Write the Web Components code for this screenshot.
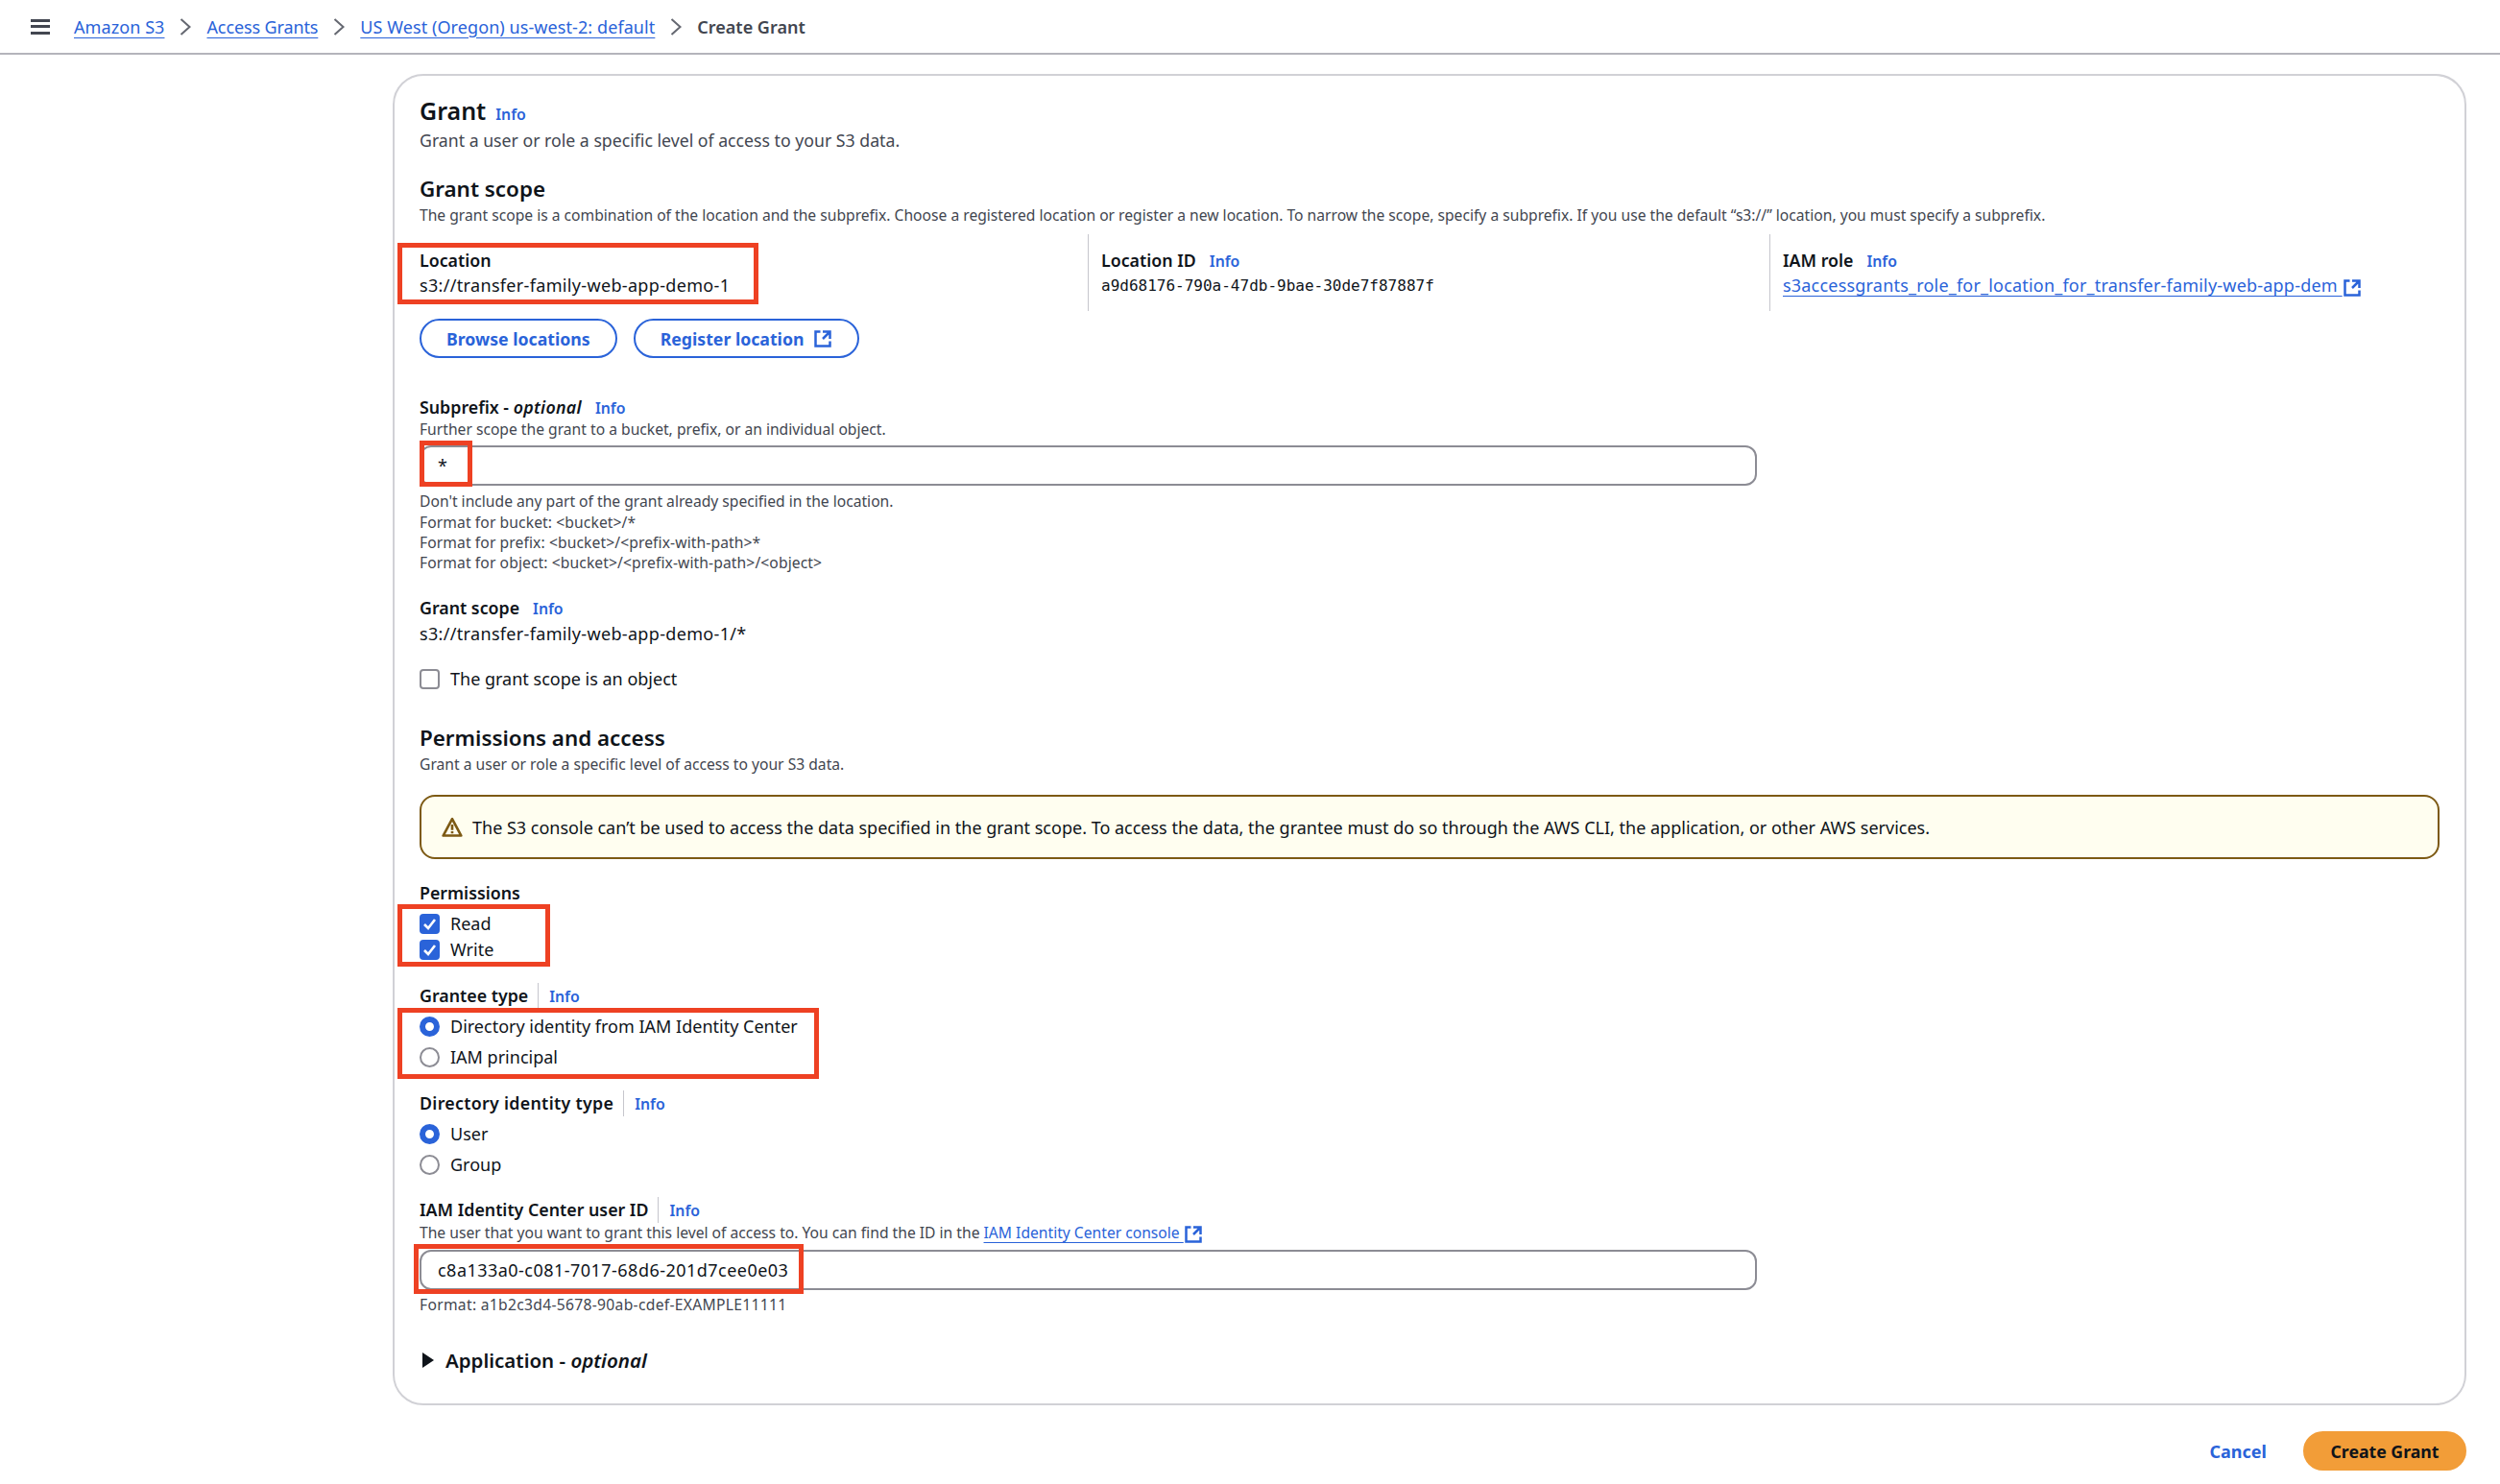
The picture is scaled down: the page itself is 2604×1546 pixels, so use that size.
<!DOCTYPE html>
<html>
<head>
<meta charset="utf-8">
<title>Create Grant</title>
<style>
  html, body { margin: 0; background: #fff; }
  body { font-family: "Noto Sans", "Open Sans", sans-serif; color: #0f141a; }
</style>
</head>
<body>
<grant-page></grant-page>

<script>
const BLUE = "#2a63d9";

class InfoLink extends HTMLElement {
  connectedCallback() {
    this.attachShadow({ mode: "open" });
    this.shadowRoot.innerHTML = `<style>
        :host { display: inline-block; color: ${BLUE}; font-size: 15.8px; font-weight: 600; font-style: normal; }
      </style>Info`;
  }
}
customElements.define("info-link", InfoLink);

class ExtIcon extends HTMLElement {
  connectedCallback() {
    this.attachShadow({ mode: "open" });
    const size = this.getAttribute("size") || 20;
    this.shadowRoot.innerHTML = `<style>
        :host { display: inline-block; width: ${size}px; height: ${size}px; vertical-align: -2px; margin: -4px 0; }
        svg { display: block; }
      </style>
      <svg width="${size}" height="${size}" viewBox="0 0 16 16" fill="none" stroke="${BLUE}" stroke-width="2">
        <path d="M14 8.01v-6H8M14.02 2 8 8M6 2H2v12h12v-4"/>
      </svg>`;
  }
}
customElements.define("ext-icon", ExtIcon);

class TopCrumbs extends HTMLElement {
  connectedCallback() {
    this.attachShadow({ mode: "open" });
    const chevron = `<svg class="chev" width="12" height="20" viewBox="0 0 12 20" fill="none" stroke="#656871" stroke-width="2"><path d="M1.5 2l9 8-9 8"/></svg>`;
    this.shadowRoot.innerHTML = `<style>
        :host { display: flex; align-items: center; height: 57px; box-sizing: border-box; border-bottom: 2px solid #b4b4bb; padding-left: 32px; font-size: 18px; }
        .menu { width: 20px; height: 16px; margin-right: 25px; border-top: 3px solid #424650; border-bottom: 3px solid #424650; box-sizing: border-box; }
        .menu::after { content: ""; display: block; height: 3px; margin-top: 3.5px; background: #424650; }
        a { color: ${BLUE}; text-decoration: underline; text-underline-offset: 4px; letter-spacing: .08px; }
        .chev { margin: 0 16px; }
        .cur { color: #424650; font-weight: 600; }
      </style>
      <div class="menu"></div>
      <a>Amazon S3</a>${chevron}<a style="letter-spacing:-.12px">Access Grants</a>${chevron}<a>US West (Oregon) us-west-2: default</a>${chevron}<span class="cur">Create Grant</span>`;
  }
}
customElements.define("top-crumbs", TopCrumbs);

class PillButton extends HTMLElement {
  connectedCallback() {
    this.attachShadow({ mode: "open" });
    this.shadowRoot.innerHTML = `<style>
        :host { display: inline-flex; align-items: center; gap: 10px; height: 41px; box-sizing: border-box; padding: 0 26px; border: 2px solid ${BLUE}; border-radius: 21px; color: ${BLUE}; font-size: 17.7px; font-weight: 700; }
        :host([primary]) { background: #f29d38; border-color: #f29d38; color: #0f141a; padding: 0 26.5px; }
      </style><slot></slot>`;
  }
}
customElements.define("pill-button", PillButton);

class FieldLabel extends HTMLElement {
  connectedCallback() {
    this.attachShadow({ mode: "open" });
    const info = this.getAttribute("info");
    const cls = info === "bar" ? "bar" : "";
    this.shadowRoot.innerHTML = `<style>
        :host { display: flex; align-items: center; height: 26px; font-size: 17.8px; font-weight: 600; color: #0f141a; }
        .row { display: flex; align-items: center; }
        .sep { margin-left: 14px; }
        .bar .sep { margin-left: 10px; padding-left: 11px; border-left: 1px solid #c6c6cd; line-height: 26px; }
      </style>
      <div class="row ${cls}"><span><slot></slot></span>
      ${info !== null ? `<span class="sep"><info-link></info-link></span>` : ""}</div>`;
  }
}
customElements.define("field-label", FieldLabel);

class TextBox extends HTMLElement {
  connectedCallback() {
    this.attachShadow({ mode: "open" });
    this.shadowRoot.innerHTML = `<style>
        :host { display: flex; align-items: center; width: 1393px; height: 42px; box-sizing: border-box; padding-left: 17px; border: 2px solid #8c8c94; border-radius: 12px; font-size: 18px; background: #fff; }
      </style><slot></slot>`;
  }
}
customElements.define("text-box", TextBox);

class CheckItem extends HTMLElement {
  connectedCallback() {
    this.attachShadow({ mode: "open" });
    const on = this.hasAttribute("checked");
    const mark = on ? `<svg width="21" height="21" viewBox="0 0 21 21" fill="none" stroke="#fff" stroke-width="2.6"><path d="M5 11l4 4 7-9"/></svg>` : "";
    this.shadowRoot.innerHTML = `<style>
        :host { display: flex; align-items: center; gap: 11px; font-size: 18px; color: #0f141a; }
        .box { width: 21px; height: 21px; box-sizing: border-box; border-radius: 4px; border: 2px solid #8c8c94; flex: none; }
        .on { background: ${BLUE}; border: 0; }
        svg { display: block; }
      </style>
      <span class="box ${on ? "on" : ""}">${mark}</span><span><slot></slot></span>`;
  }
}
customElements.define("check-item", CheckItem);

class RadioItem extends HTMLElement {
  connectedCallback() {
    this.attachShadow({ mode: "open" });
    const on = this.hasAttribute("checked");
    this.shadowRoot.innerHTML = `<style>
        :host { display: flex; align-items: center; gap: 11px; font-size: 18px; color: #0f141a; }
        .dot { width: 21px; height: 21px; box-sizing: border-box; border-radius: 50%; border: 2.5px solid #8c8c94; flex: none; }
        .on { border: 6px solid ${BLUE}; }
      </style>
      <span class="dot ${on ? "on" : ""}"></span><span><slot></slot></span>`;
  }
}
customElements.define("radio-item", RadioItem);

class WarnBox extends HTMLElement {
  connectedCallback() {
    this.attachShadow({ mode: "open" });
    this.shadowRoot.innerHTML = `<style>
        :host { display: flex; align-items: center; gap: 10px; height: 67px; box-sizing: border-box; padding-left: 21px; border: 2px solid #7d5a14; border-radius: 16px; background: #fffef0; font-size: 18px; }
      </style>
      <svg width="22" height="22" viewBox="0 0 16 16" fill="none" stroke="#7d5a14" stroke-width="1.9" stroke-linejoin="round">
        <path d="M8 1.6 1.2 14.2h13.6z"/><path d="M8 5.8v4.2M8 10.9v1.6"/>
      </svg>
      <span><slot></slot></span>`;
  }
}
customElements.define("warn-box", WarnBox);

// annotation rectangles drawn on top of the screenshot
class RedMark extends HTMLElement {
  connectedCallback() {
    this.attachShadow({ mode: "open" });
    const [x, y, w, h] = this.getAttribute("box").split(",");
    this.shadowRoot.innerHTML = `<style>
        :host { position: absolute; left: ${x}px; top: ${y}px; width: ${w}px; height: ${h}px; box-sizing: border-box; border: 5px solid #ee4123; }
      </style>`;
  }
}
customElements.define("red-mark", RedMark);

class GrantPage extends HTMLElement {
  connectedCallback() {
    this.attachShadow({ mode: "open" });
    this.shadowRoot.innerHTML = `<style>
        :host { display: block; position: relative; height: 1546px; overflow: hidden; font-size: 18px; line-height: 26px; }
        .card { margin: 20px 35px 0 409px; height: 1387px; box-sizing: border-box; border: 2px solid #d1d1d6; border-radius: 32px; padding: 18px 26px; }
        h2 { margin: 0; height: 36px; font-size: 25px; font-weight: 600; line-height: 36px; display: flex; align-items: baseline; gap: 10px; }
        h3 { margin: 0; font-size: 22.4px; font-weight: 600; line-height: 30px; }
        p { margin: 0; }
        .desc { color: #424650; font-size: 17.7px; }
        .small { color: #424650; font-size: 15.65px; line-height: 21.2px; }
        .fmt { letter-spacing: .1px; }
        .cols { display: grid; grid-template-columns: 696px 710px 1fr; height: 80px; margin-top: 9px; }
        .cols > div { padding-top: 14px; box-sizing: border-box; }
        .cols > div + div { border-left: 1px solid #c6c6cd; padding-left: 13px; }
        .mono { font-family: "DejaVu Sans Mono", monospace; font-size: 16px; padding-top: 1px; }
        .path { letter-spacing: .33px; }
        a { color: ${BLUE}; text-decoration: underline; text-underline-offset: 4px; }
        .btns { display: flex; gap: 17px; margin-top: 8px; }
        .ft { display: flex; justify-content: flex-end; align-items: center; gap: 38px; margin: 27px 35px 0 0; }
        .cancel { color: ${BLUE}; font-weight: 700; font-size: 18px; }
        .tri { display: inline-block; width: 0; height: 0; border-left: 12px solid #0f141a; border-top: 8px solid transparent; border-bottom: 8px solid transparent; margin: 0 12px 0 3px; }
        .app { display: flex; align-items: center; font-size: 20.5px; font-weight: 600; margin-top: 34px; }
      </style>
      <top-crumbs></top-crumbs>
      <div class="card">
        <h2>Grant <info-link></info-link></h2>
        <p class="desc">Grant a user or role a specific level of access to your S3 data.</p>
        <h3 style="margin-top:23px">Grant scope</h3>
        <p class="small" style="margin-top:2px">The grant scope is a combination of the location and the subprefix. Choose a registered location or register a new location. To narrow the scope, specify a subprefix. If you use the default “s3://” location, you must specify a subprefix.</p>
        <div class="cols">
          <div><field-label>Location</field-label><div class="path">s3://transfer-family-web-app-demo-1</div></div>
          <div><field-label info>Location ID</field-label><div class="mono">a9d68176-790a-47db-9bae-30de7f87887f</div></div>
          <div><field-label info>IAM role</field-label><div style="letter-spacing:.2px"><a>s3accessgrants_role_for_location_for_transfer-family-web-app-dem </a><ext-icon></ext-icon></div></div>
        </div>
        <div class="btns"><pill-button>Browse locations</pill-button><pill-button>Register location <ext-icon></ext-icon></pill-button></div>

        <field-label info style="margin-top:38px"><span>Subprefix - <i style="letter-spacing:.3px">optional</i></span></field-label>
        <p class="small" style="margin-top:0">Further scope the grant to a bucket, prefix, or an individual object.</p>
        <text-box style="margin-top:6px">*</text-box>
        <div class="small" style="margin-top:6px">
          <div>Don't include any part of the grant already specified in the location.</div>
          <div class="fmt">Format for bucket: &lt;bucket&gt;/*</div>
          <div class="fmt">Format for prefix: &lt;bucket&gt;/&lt;prefix-with-path&gt;*</div>
          <div class="fmt">Format for object: &lt;bucket&gt;/&lt;prefix-with-path&gt;/&lt;object&gt;</div>
        </div>
        <field-label info style="margin-top:23px">Grant scope</field-label>
        <div class="path" style="margin-top:1px">s3://transfer-family-web-app-demo-1/*</div>
        <check-item style="margin-top:21px">The grant scope is an object</check-item>

        <h3 style="margin-top:34px">Permissions and access</h3>
        <p class="small" style="margin-top:2px">Grant a user or role a specific level of access to your S3 data.</p>
        <warn-box style="margin-top:21px">The S3 console can’t be used to access the data specified in the grant scope. To access the data, the grantee must do so through the AWS CLI, the application, or other AWS services.</warn-box>

        <field-label style="margin-top:22px">Permissions</field-label>
        <check-item checked style="margin-top:6px">Read</check-item>
        <check-item checked style="margin-top:1px">Write</check-item>

        <field-label info="bar" style="margin-top:22px">Grantee type</field-label>
        <radio-item checked style="margin-top:6px">Directory identity from IAM Identity Center</radio-item>
        <radio-item style="margin-top:6px">IAM principal</radio-item>

        <field-label info="bar" style="margin-top:22px"><span style="letter-spacing:.3px">Directory identity type</span></field-label>
        <radio-item checked style="margin-top:6px">User</radio-item>
        <radio-item style="margin-top:6px">Group</radio-item>

        <field-label info="bar" style="margin-top:21px">IAM Identity Center user ID</field-label>
        <p class="small" style="margin-top:1px">The user that you want to grant this level of access to. You can find the ID in the <a>IAM Identity Center console </a><ext-icon></ext-icon></p>
        <text-box style="margin-top:6px"><span style="letter-spacing:.47px">c8a133a0-c081-7017-68d6-201d7cee0e03</span></text-box>
        <p class="small" style="margin-top:5px;letter-spacing:.3px">Format: a1b2c3d4-5678-90ab-cdef-EXAMPLE11111</p>
        <div class="app"><span class="tri"></span><span>Application - <i>optional</i></span></div>
      </div>
      <div class="ft"><span class="cancel">Cancel</span><pill-button primary>Create Grant</pill-button></div>

      <red-mark box="414,253,376,64"></red-mark>
      <red-mark box="437,459,55,48"></red-mark>
      <red-mark box="414,942,159,65"></red-mark>
      <red-mark box="414,1050,439,74"></red-mark>
      <red-mark box="431,1296,406,52"></red-mark>`;
  }
}
customElements.define("grant-page", GrantPage);
</script>
</body>
</html>
